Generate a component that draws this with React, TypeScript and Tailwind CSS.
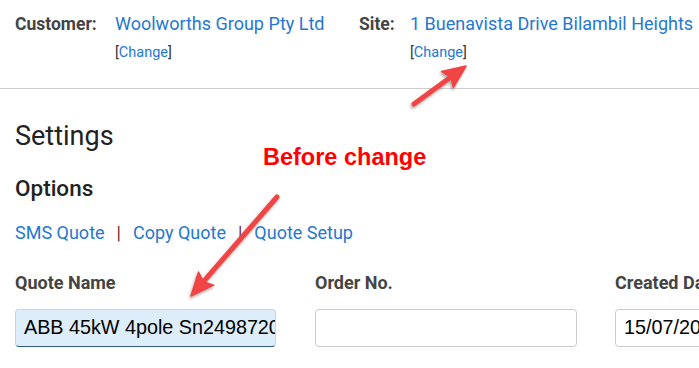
import React from "react";

type ArrowProps = { x1: number; y1: number; x2: number; y2: number };

// red annotation arrow, head drawn as a triangle at (x2, y2)
function Arrow({ x1, y1, x2, y2 }: ArrowProps) {
  const dx = x2 - x1;
  const dy = y2 - y1;
  const len = Math.hypot(dx, dy);
  const ux = dx / len;
  const uy = dy / len;
  const head = 23;
  const half = 10;
  const bx = x2 - ux * head;
  const by = y2 - uy * head;
  const pts = [
    `${x2},${y2}`,
    `${bx - uy * half},${by + ux * half}`,
    `${bx + ux * 4},${by + uy * 4}`,
    `${bx + uy * half},${by - ux * half}`,
  ].join(" ");
  return (
    <g>
      <line
        x1={x1}
        y1={y1}
        x2={bx + ux * 6}
        y2={by + uy * 6}
        stroke="#f04444"
        strokeWidth={5}
        strokeLinecap="round"
      />
      <polygon points={pts} fill="#f04444" stroke="#f04444" strokeWidth={1.5} strokeLinejoin="round" />
    </g>
  );
}

function ChangeLink() {
  return (
    <div className="mt-[7px] text-[14.5px] leading-[18px] text-[#333]">
      [<span className="text-[#1f78d1]">Change</span>]
    </div>
  );
}

function Field({ label, children }: { label: string; children: React.ReactNode }) {
  return (
    <div className="w-[300px] shrink-0">
      <div className="text-[18px] leading-6 font-bold text-[#444] whitespace-nowrap">{label}</div>
      <div className="mt-[14px]">{children}</div>
    </div>
  );
}

export default function App() {
  return (
    <div className="relative w-[699px] h-[368px] overflow-hidden bg-white font-['Roboto',sans-serif]">
      <div className="flex pl-[15px] pt-[11px] h-[88px]">
        <div className="flex w-[344px] shrink-0">
          <div className="w-[100px] text-[17.5px] leading-[26px] font-bold text-[#444]">Customer:</div>
          <div>
            <div className="text-[18px] leading-[26px] text-[#1f78d1]">Woolworths Group Pty Ltd</div>
            <ChangeLink />
          </div>
        </div>
        <div className="flex">
          <div className="w-[51px] shrink-0 text-[17.5px] leading-[26px] font-bold text-[#444]">Site:</div>
          <div>
            <div className="text-[18px] leading-[26px] text-[#1f78d1] whitespace-nowrap">
              1 Buenavista Drive Bilambil Heights
            </div>
            <ChangeLink />
          </div>
        </div>
      </div>
      <div className="h-px bg-[#cfcfcf]" />

      <div className="pl-[15px] pt-[31px]">
        <h1 className="text-[27px] leading-8 text-[#222]">Settings</h1>
        <h2 className="mt-[22px] text-[22.5px] leading-7 font-medium text-[#222]">Options</h2>
        <div className="mt-[19px] flex items-center text-[18px] leading-6 text-[#1f78d1]">
          <span>SMS Quote</span>
          <span className="mx-[12px] text-[#6b2b2b]">|</span>
          <span>Copy Quote</span>
          <span className="mx-[12px] text-[#6b2b2b]">|</span>
          <span>Quote Setup</span>
        </div>

        <div className="mt-[26px] flex">
          <Field label="Quote Name">
            <div className="w-[261px] h-[38px] rounded-[4px] border border-[#c8d4de] border-b-[#2c5d8c] bg-[#ddedf9] px-[8px] flex items-center overflow-hidden whitespace-nowrap font-['Liberation_Sans',Arial,sans-serif] text-[19.75px] text-black">
              ABB 45kW 4pole Sn249872
              <span className="inline-block w-px h-[22px] bg-black" />
              0120
            </div>
          </Field>
          <Field label="Order No.">
            <div className="w-[262px] h-[38px] rounded-[4px] border border-[#cccccc] bg-white" />
          </Field>
          <Field label="Created Date">
            <div className="w-[262px] h-[38px] rounded-[4px] border border-[#cccccc] bg-white px-[8px] flex items-center whitespace-nowrap font-['Liberation_Sans',Arial,sans-serif] text-[19.75px] text-black">
              15/07/2021
            </div>
          </Field>
        </div>
      </div>

      <div className="absolute left-[263px] top-[146px] font-['Liberation_Sans',Arial,sans-serif] font-bold text-[23.5px] leading-[23.5px] text-[#ff0000] whitespace-nowrap">
        Before change
      </div>

      <svg className="absolute inset-0 pointer-events-none" width={699} height={368}>
        <defs>
          <filter id="sh" x="-20%" y="-20%" width="140%" height="140%">
            <feDropShadow dx="-1" dy="2" stdDeviation="1.5" floodColor="#000" floodOpacity="0.35" />
          </filter>
        </defs>
        <g filter="url(#sh)">
          <Arrow x1={414} y1={104} x2={466} y2={66} />
          <Arrow x1={277} y1={197} x2={191} y2={296} />
        </g>
      </svg>
    </div>
  );
}
